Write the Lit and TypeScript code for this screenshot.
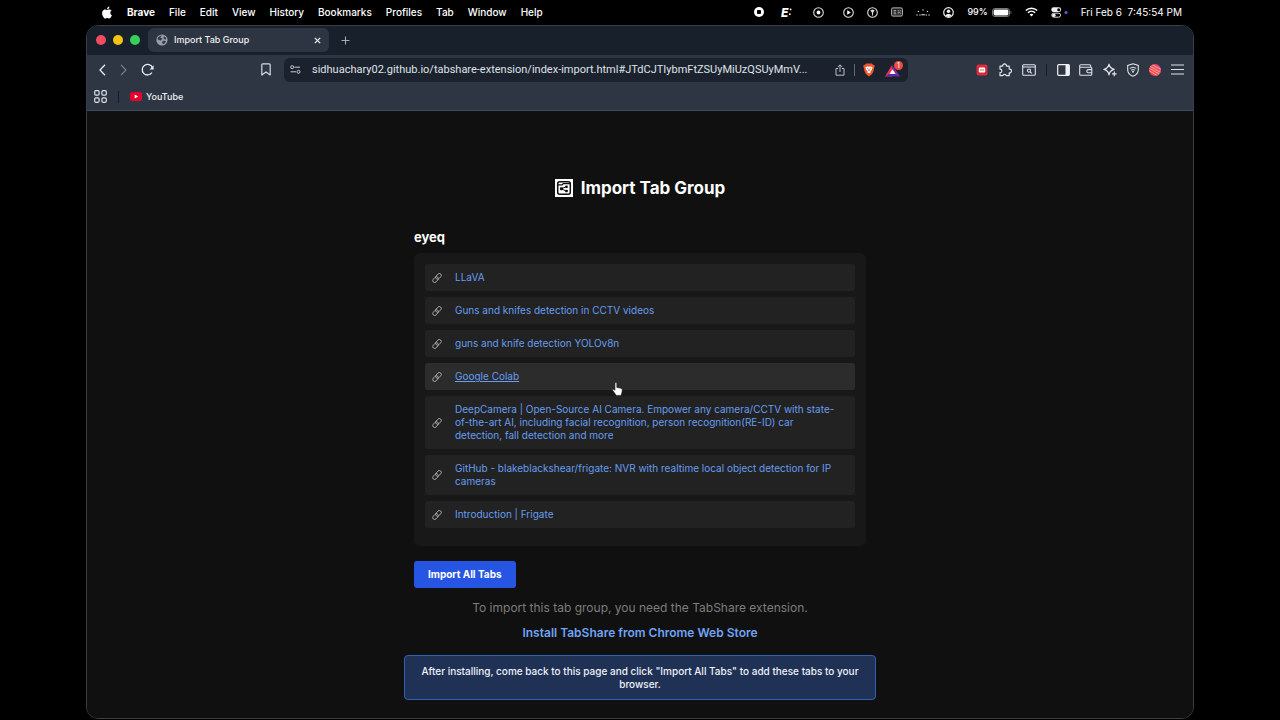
import { LitElement, html, css, svg } from "lit";
import { customElement, property } from "lit/decorators.js";

const icon = (w: number, h: number, box: string, body: unknown, cls = "") =>
  html`<svg class="ico ${cls}" width=${w} height=${h} viewBox=${box} aria-hidden="true">${body}</svg>`;

/* ---------- menu bar glyphs ---------- */
const apple = icon(12, 13, "0 0 24 24", svg`<path fill="#fff" d="M12.152 6.896c-.948 0-2.415-1.078-3.96-1.04-2.04.027-3.91 1.183-4.961 3.014-2.117 3.675-.546 9.103 1.519 12.09 1.013 1.454 2.208 3.09 3.792 3.039 1.52-.065 2.09-.987 3.935-.987 1.831 0 2.35.987 3.96.948 1.637-.026 2.676-1.48 3.676-2.948 1.156-1.688 1.636-3.325 1.662-3.415-.039-.013-3.182-1.221-3.22-4.857-.026-3.04 2.48-4.494 2.597-4.559-1.429-2.09-3.623-2.324-4.39-2.376-2-.156-3.675 1.09-4.61 1.09zM15.53 3.83c.843-1.012 1.4-2.427 1.245-3.83-1.207.052-2.662.805-3.532 1.818-.78.896-1.454 2.338-1.273 3.714 1.338.104 2.715-.688 3.559-1.701"/>`);
const stopIcon = icon(10, 10, "0 0 10 10", svg`<circle cx="5" cy="5" r="5" fill="#fff"/><rect x="3" y="3" width="4" height="4" rx=".8" fill="#000"/>`);
const eIcon = icon(11, 12, "0 0 11 12", svg`<text x="0" y="10.5" font-size="12" font-weight="800" font-style="italic" font-family="Inter, sans-serif" fill="#fff">E</text><circle cx="9.6" cy="3.4" r=".9" fill="#fff"/><circle cx="8.8" cy="8.2" r=".9" fill="#fff"/>`);
const recIcon = icon(11, 11, "0 0 11 11", svg`<circle cx="5.5" cy="5.5" r="4.8" fill="none" stroke="#ddd" stroke-width="1.1"/><circle cx="5.5" cy="5.5" r="1.9" fill="#fff"/>`);
const playIcon = icon(11, 11, "0 0 11 11", svg`<circle cx="5.5" cy="5.5" r="4.8" fill="none" stroke="#ddd" stroke-width="1.1"/><path d="M4.2 3.3 7.8 5.5 4.2 7.7Z" fill="#fff"/>`);
const keyIcon = icon(11, 11, "0 0 11 11", svg`<circle cx="5.5" cy="5.5" r="4.8" fill="none" stroke="#ddd" stroke-width="1.1"/><circle cx="5.5" cy="4" r="1.5" fill="#ddd"/><path d="M5.5 4.5V8.6M3.5 3.8h4" stroke="#ddd" stroke-width="1.1"/>`);
const cardIcon = icon(12, 10, "0 0 12 10", svg`<rect x=".6" y=".9" width="10.8" height="8.2" rx="1.4" fill="#222" stroke="#bbb"/><path d="M2.6 3.6h2.6M2.6 5.2h2.2M2.6 6.8h2.8M6.6 3.6h1.2M8.8 3.6h1M6.6 5.2h3M6.6 6.8h1.2M8.8 6.8h1" stroke="#bbb" stroke-width=".9"/>`);
const dotsIcon = icon(14, 10, "0 0 14 10", svg`<g fill="#ddd"><circle cx="1" cy="8" r=".7"/><circle cx="2.4" cy="4.4" r=".7"/><circle cx="4" cy="8" r=".7"/><circle cx="7" cy="3" r=".7"/><circle cx="11.5" cy="4.4" r=".7"/><circle cx="10.2" cy="8" r=".7"/><circle cx="13" cy="8" r=".7"/><rect x="5.4" y="7.2" width="3.4" height="1.1"/></g>`);
const userIcon = icon(11, 11, "0 0 11 11", svg`<circle cx="5.5" cy="5.5" r="4.8" fill="none" stroke="#eee" stroke-width="1.2"/><circle cx="5.5" cy="4.2" r="1.7" fill="#eee"/><path d="M2.3 8.6C3 6.4 8 6.4 8.7 8.6 7 10.4 4 10.4 2.3 8.6Z" fill="#eee"/>`);
const battery = icon(20, 9, "0 0 20 9", svg`<rect x=".5" y=".5" width="17" height="8" rx="2.4" fill="none" stroke="#777"/><rect x="1.6" y="1.6" width="14.8" height="5.8" rx="1.4" fill="#fff"/><path d="M18.6 3c1.2.4 1.2 2.6 0 3Z" fill="#888"/>`);
const wifi = icon(13, 10, "0 0 13 10", svg`<g fill="none" stroke="#fff" stroke-width="1.5"><path d="M.8 3.6C4 .3 9 .3 12.2 3.6"/><path d="M2.9 5.8C5 3.7 8 3.7 10.1 5.8"/></g><path d="M6.5 9.6 4.6 7.5C5.6 6.5 7.4 6.5 8.4 7.5Z" fill="#fff"/>`);
const control = icon(17, 11, "0 0 17 11", svg`<rect x=".3" y=".3" width="9.8" height="4.7" rx="2.3" fill="#eee"/><circle cx="7.7" cy="2.65" r="1.5" fill="#000"/><rect x=".8" y="6.2" width="8.8" height="4" rx="2" fill="none" stroke="#ddd"/><circle cx="2.9" cy="8.2" r="1.7" fill="#eee"/><circle cx="15" cy="5.5" r="1.6" fill="#6a4fe0"/>`);

/* ---------- browser glyphs ---------- */
const globe = icon(12, 12, "0 0 12 12", svg`<circle cx="6" cy="6" r="5.6" fill="#9aa0aa"/><path d="M2 3.6c1-.9 2-1.7 3.2-2 .7.8-.1 1.3-.9 1.8.5.8 1.6.4 2 1.2.3.9-.8 1-1.2 1.8-.9.3-1.8-.6-2.8-.7-.7-.3-1-.9-.3-2.1ZM8 2.2c1.2.5 2 1.5 2.4 2.9-.8.7-2.3.3-2.7-.7-.3-.9-.3-1.6.3-2.2ZM6.7 7.1c.9-.6 2.3-.4 3.2.2-.3 1.3-1.3 2.4-2.8 2.9-.9-.6-1.2-2.3-.4-3.1Z" fill="#353c4a"/>`);
const close = icon(7, 7, "0 0 7 7", svg`<path d="M.8.8 6.2 6.2M6.2.8.8 6.2" stroke="#eee" stroke-width="1.2"/>`);
const plus = icon(9, 9, "0 0 9 9", svg`<path d="M4.5.5v8M.5 4.5h8" stroke="#a4a9b3" stroke-width="1.1"/>`);
const back = icon(7, 12, "0 0 7 12", svg`<path d="M6 .8 1 6l5 5.2" fill="none" stroke="#e6e9ef" stroke-width="1.3"/>`);
const fwd = icon(7, 12, "0 0 7 12", svg`<path d="M1 .8 6 6 1 11.2" fill="none" stroke="#767d8b" stroke-width="1.2"/>`);
const reload = icon(13, 13, "0 0 13 13", svg`<path d="M10.9 9.7A5.3 5.3 0 1 1 11.5 4.8" fill="none" stroke="#e6e9ef" stroke-width="1.3"/><path d="M12.6 2.2v4.2H8.6Z" fill="#e6e9ef"/>`);
const mark = icon(10, 13, "0 0 10 13", svg`<path d="M.8 1.8Q.8.8 1.8.8h6.4q1 0 1 1v10.2L5 8.9.8 12Z" fill="none" stroke="#d5d9e2" stroke-width="1.2" stroke-linejoin="round"/>`);
const tune = icon(11, 9, "0 0 11 9", svg`<g fill="none" stroke="#c9ced8"><circle cx="2.2" cy="2.2" r="1.5"/><path d="M4.5 2.2H10M.6 6.8H6"/><circle cx="8.5" cy="6.8" r="1.5"/></g>`);
const share = icon(10, 12, "0 0 10 12", svg`<g fill="none" stroke="#b9bfca"><path d="M3.2 4.5H1v6.7h8V4.5H6.8M5 8V1M2.8 3 5 .8 7.2 3"/></g>`);
const brave = icon(12, 14, "0 0 12 14", svg`<path d="M3.2.6h5.6L10 1.8l1.3.2.4 1.6-.5 1.2c-.4 3-1.2 5.2-2.7 6.7L6 13.4l-2.5-1.9C2 10 1.2 7.8.8 4.8L.3 3.6.7 2 2 1.8Z" fill="#f0562b"/><path d="M2.5 4 4.8 3.4 6 3.8l1.2-.4 2.3.6-.6 2.7L7.4 8.3l.4 1L6 10.5 4.2 9.3l.4-1L3.1 6.7Z" fill="#fff"/><path d="M3.7 5 5.3 5.5 4.9 6.4ZM8.3 5 6.7 5.5 7.1 6.4ZM5.6 6.2h.8l.3 1.7L6 8.3l-.7-.4Z" fill="#d7431d"/>`);
const bat = icon(18, 18, "0 0 18 18", svg`<path d="M8 4 1 15.5h7l1-4Z" fill="#ef3355"/><path d="M1 15.5h15l-3.5-4.2H7.5Z" fill="#5b2aa0"/><path d="M8 4 16 15.5 9.5 12Z" fill="#8b2fa8"/><path d="M8.5 8.2 11.6 13.1H5.5Z" fill="#fff"/>`);
const redBox = icon(12, 12, "0 0 12 12", svg`<rect x=".5" y=".5" width="11" height="11" rx="2" fill="#d92b3a"/><rect x="2.8" y="3.6" width="6.4" height="4.8" rx="1.2" fill="#fff"/><path d="M4 6h4" stroke="#d92b3a" stroke-width=".8"/>`);
const puzzle = icon(14, 14, "0 0 14 14", svg`<path d="M2 3.2h2.7a1.9 1.9 0 1 1 3.7 0h2.8v2.9a1.9 1.9 0 1 1 0 3.7v2.9H8.3a1.8 1.8 0 0 0-3.5 0H2V9.7a1.8 1.8 0 0 0 0-3.6Z" fill="none" stroke="#dfe3ea" stroke-width="1.2" stroke-linejoin="round"/>`);
const winSearch = icon(14, 12, "0 0 14 12", svg`<g fill="none" stroke="#dfe3ea" stroke-width="1.1"><rect x=".7" y=".7" width="12.6" height="10.6" rx="1"/><path d="M.7 3h12.6"/><circle cx="7" cy="6.6" r="1.6"/><path d="M8.2 7.8 9.7 9.4"/></g>`);
const sidebar = icon(13, 12, "0 0 13 12", svg`<rect x=".7" y=".7" width="11.6" height="10.6" rx="1" fill="none" stroke="#eef1f6" stroke-width="1.2"/><path d="M8.5.7H12.3V11.3H8.5Z" fill="#eef1f6"/>`);
const wallet = icon(14, 12, "0 0 14 12", svg`<g fill="none" stroke="#dfe3ea" stroke-width="1.1"><path d="M11.7 3.2V1.8Q11.7.7 10.6.7H1.8Q.7.7.7 1.8v8.4q0 1.1 1.1 1.1h9.9q1.1 0 1.1-1.1V4.3q0-1.1-1.1-1.1H.9"/><path d="M13 5.6H9.4q-1.6 0-1.6 1.6t1.6 1.6H13"/></g>`);
const spark = icon(14, 14, "0 0 14 14", svg`<path d="M6 1.2Q6.8 5.4 11.2 6.4 6.8 7.4 6 11.8 5.2 7.4.9 6.4 5.2 5.4 6 1.2Z" fill="none" stroke="#dfe3ea" stroke-width="1.2" stroke-linejoin="round"/><path d="M11.3 8.6v4.6M9 10.9h4.6" stroke="#dfe3ea" stroke-width="1.2"/>`);
const shield = icon(12, 14, "0 0 12 14", svg`<path d="M6 .8 11.3 2.5v4.2c0 3-2.2 5.3-5.3 6.5C2.9 12 .7 9.7.7 6.7V2.5Z" fill="none" stroke="#dfe3ea" stroke-width="1.1"/><path d="M2.8 5.4Q6 3 9.2 5.4M4 7.2Q6 5.8 8 7.2" fill="none" stroke="#dfe3ea"/><circle cx="6" cy="8.7" r="1" fill="#dfe3ea"/>`);
const avatar = icon(12, 12, "0 0 12 12", svg`<defs><linearGradient id="av" x1="0" y1="1" x2="1" y2="0"><stop offset="0" stop-color="#f0305a"/><stop offset=".5" stop-color="#f2505c"/><stop offset="1" stop-color="#e03a9a"/></linearGradient><clipPath id="avc"><circle cx="6" cy="6" r="6"/></clipPath></defs><circle cx="6" cy="6" r="6" fill="url(#av)"/><g clip-path="url(#avc)" stroke="#ffc08a" stroke-width=".8"><path d="M-1 1 12 8.5M-1 3.5 11 10.5M-1 6 9 12M1-.5 13 6"/></g>`);
const burger = icon(13, 11, "0 0 13 11", svg`<path d="M0 1h13M0 5.5h13M0 10h13" stroke="#dfe3ea" stroke-width="1.2"/>`);
const grid4 = icon(13, 13, "0 0 13 13", svg`<g fill="none" stroke="#dfe3ea" stroke-width="1.2"><rect x=".7" y=".7" width="4.4" height="4.4" rx="1.2"/><rect x="7.9" y=".7" width="4.4" height="4.4" rx="1.2"/><rect x=".7" y="7.9" width="4.4" height="4.4" rx="1.2"/><rect x="7.9" y="7.9" width="4.4" height="4.4" rx="1.2"/></g>`);
const youtube = icon(12, 9, "0 0 12 9", svg`<rect width="12" height="9" rx="2" fill="#e4002f"/><path d="M4.7 2.5 8.2 4.5 4.7 6.5Z" fill="#fff"/>`);

/* ---------- page glyphs ---------- */
const logo = icon(18, 18, "0 0 18 18", svg`<rect width="18" height="18" fill="#fff"/><rect x="2.7" y="2.7" width="12.6" height="12.6" rx="2" fill="#fff" stroke="#111" stroke-width="1.5"/><path d="M3 5.8H7.2L8.2 4.6H15" fill="none" stroke="#111" stroke-width="1.2"/><path d="M6.4 9.8 11.2 7.8M6.4 9.8 11.2 12" stroke="#111" stroke-width="1"/><rect x="5" y="8.3" width="3" height="3" rx=".8" fill="#111"/><rect x="10.2" y="6.6" width="2.6" height="2.4" rx=".8" fill="#111"/><rect x="10.2" y="10.8" width="2.6" height="2.4" rx=".8" fill="#111"/>`);
const chain = icon(10, 10, "0 0 10 10", svg`<g fill="none" stroke="#b0b0b0" stroke-width=".9" transform="rotate(-48 5 5)"><rect x="-.4" y="3.1" width="6.4" height="3.8" rx="1.9"/><rect x="4" y="3.1" width="6.4" height="3.8" rx="1.9"/></g>`);
const hand = icon(11, 14, "0 0 11 14", svg`<path d="M3 1.5q0-1 .9-1t.9 1V5.4l4 .8q1.5.4 1.5 1.8l-.5 3q-.3 1.4-1 2.4H4.3Q2.5 11 .8 8.6q-.5-1 .3-1.3.8-.2 1.9 1Z" fill="#fff" stroke="#222" stroke-width=".6"/>`);

@customElement("mac-menubar")
class MacMenubar extends LitElement {
  static styles = css`
    :host { display: flex; align-items: center; justify-content: space-between; height: 24px; padding: 0 98px 1px 101px; color: #fff; font-size: 10px; line-height: 12px; font-weight: 500; white-space: nowrap; }
    .ico { display: block; flex: none; }
    .menus { display: flex; align-items: center; gap: 14px; }
    .status { display: flex; align-items: center; gap: 13px; }
    button { all: unset; }
    .app { font-weight: 700; }
    .pct { display: flex; align-items: center; gap: 4px; font-size: 9px; }
    .editor { margin: 0 8px 0 4px; }
    .play { margin-left: 6px; }
    .clock { font-weight: 400; white-space: pre; }
  `;
  render() {
    const menus = ["File", "Edit", "View", "History", "Bookmarks", "Profiles", "Tab", "Window", "Help"];
    return html`
      <nav class="menus" aria-label="Menu bar">
        <button aria-label="Apple">${apple}</button>
        <button class="app">Brave</button>
        ${menus.map((m) => html`<button>${m}</button>`)}
      </nav>
      <div class="status">
        ${stopIcon}<span class="editor">${eIcon}</span>${recIcon}<span class="play">${playIcon}</span>${keyIcon}${cardIcon}${dotsIcon}${userIcon}
        <span class="pct">99% ${battery}</span>
        ${wifi}${control}
        <span class="clock">Fri Feb 6  7:45:54 PM</span>
      </div>
    `;
  }
}

@customElement("browser-chrome")
class BrowserChrome extends LitElement {
  static styles = css`
    :host { display: block; color: #eef0f4; font-size: 9px; line-height: 14px; }
    .ico { display: block; flex: none; }
    button { all: unset; display: flex; }
    .strip { display: flex; align-items: center; box-sizing: border-box; height: 29px; padding: 0 9px 1px; background: #18202b; }
    .lights { display: flex; gap: 7px; margin-right: 8px; }
    .light { width: 10px; height: 10px; border-radius: 50%; }
    .red { background: #f04b5f; }
    .yellow { background: #f3c316; }
    .green { background: #38cf58; }
    .tab { display: flex; align-items: center; gap: 6px; box-sizing: border-box; width: 181px; height: 24px; padding: 0 8px; border-radius: 6px; background: #2e3542; margin-right: 12px; font-weight: 500; }
    .title { flex: 1; }
    .tools { display: flex; align-items: center; height: 29px; padding: 0 9px 0 12px; background: #2e3543; }
    .nav { display: flex; align-items: center; gap: 14px; width: 162px; }
    .mark { margin-right: 13px; }
    .bar { display: flex; align-items: center; gap: 9px; box-sizing: border-box; flex: 0 1 624px; min-width: 0; height: 24px; padding: 0 6px; border-radius: 6px; background: #1b222e; }
    .url { all: unset; flex: 1; min-width: 0; padding-left: 2px; color: #dfe2e8; font-family: Roboto, Inter, sans-serif; font-size: 11px; line-height: 14px; }
    .sep { width: 1px; height: 12px; background: #606775; }
    .shields { margin-left: -1px; }
    .rewards { position: relative; }
    .badge { position: absolute; right: -1px; top: 0; width: 9px; height: 9px; border-radius: 50%; background: #ee4a45; color: #fff; font-size: 7px; line-height: 9px; text-align: center; }
    .right { display: flex; align-items: center; justify-content: space-between; width: 208px; margin-left: auto; }
    .dark { background: #171d27; }
    .marks { display: flex; align-items: center; gap: 11px; height: 25px; padding: 0 7px 1px; background: #2e3543; border-bottom: 1px solid #434a57; }
    a { display: flex; align-items: center; gap: 4px; color: inherit; text-decoration: none; font-weight: 500; }
  `;
  render() {
    return html`
      <div class="strip">
        <div class="lights"><span class="light red"></span><span class="light yellow"></span><span class="light green"></span></div>
        <div class="tab">${globe}<span class="title">Import Tab Group</span><button aria-label="Close tab">${close}</button></div>
        <button aria-label="New tab">${plus}</button>
      </div>
      <div class="tools">
        <div class="nav">
          <button aria-label="Back">${back}</button><button aria-label="Forward">${fwd}</button><button aria-label="Reload">${reload}</button>
        </div>
        <button class="mark" aria-label="Bookmark this page">${mark}</button>
        <div class="bar">
          ${tune}
          <input class="url" aria-label="Address" readonly .value=${"sidhuachary02.github.io/tabshare-extension/index-import.html#JTdCJTIybmFtZSUyMiUzQSUyMmV..."} />
          <button aria-label="Share">${share}</button><span class="sep"></span><button class="shields" aria-label="Shields">${brave}</button>
          <button class="rewards" aria-label="Rewards">${bat}<span class="badge">1</span></button>
        </div>
        <div class="right">
          ${redBox}${puzzle}${winSearch}<span class="sep dark"></span>${sidebar}${wallet}${spark}${shield}${avatar}
          <button aria-label="Menu">${burger}</button>
        </div>
      </div>
      <div class="marks">
        <button aria-label="Apps">${grid4}</button><span class="sep dark"></span>
        <a href="#">${youtube}YouTube</a>
      </div>
    `;
  }
}

@customElement("link-row")
class LinkRow extends LitElement {
  @property() label = "";
  @property({ type: Boolean, reflect: true }) hovered = false;
  static styles = css`
    :host { position: relative; display: flex; align-items: center; gap: 13px; padding: 7px 12px 7px 7px; border-radius: 3px; background: #222; font-size: 10px; line-height: 13px; }
    :host([hovered]) { background: #2c2c2c; }
    .ico { display: block; flex: none; }
    a { color: #669df0; text-decoration: none; }
    :host([hovered]) a { text-decoration: underline; }
    .hand { position: absolute; left: 187px; top: 19px; z-index: 1; }
  `;
  render() {
    return html`${chain}<a href="#">${this.label}</a>${this.hovered ? html`<span class="hand">${hand}</span>` : ""}`;
  }
}

@customElement("import-page")
class ImportPage extends LitElement {
  static styles = css`
    :host { display: flex; flex-direction: column; align-items: center; padding: 65px 16px 17px; background: #101010; color: #fff; }
    .ico { display: block; flex: none; }
    h1 { display: flex; align-items: center; gap: 8px; margin: 0 0 28px; font-size: 17px; line-height: 24px; font-weight: 700; }
    .group { width: 100%; max-width: 452px; }
    h2 { margin: 0 0 7px; font-size: 13px; line-height: 18px; font-weight: 700; }
    .list { display: flex; flex-direction: column; gap: 6px; padding: 11px 11px 18px; border-radius: 6px; background: #181818; }
    .import { all: unset; display: block; box-sizing: border-box; margin: 15px 0 12px; padding: 6px 14px; border-radius: 3px; background: #2655e3; font-size: 10px; line-height: 15px; font-weight: 700; }
    p { margin: 0; font-size: 12px; line-height: 16px; color: #7d7d7d; }
    .store { margin: 9px 0 14px; font-size: 12px; line-height: 16px; font-weight: 600; color: #6fa3f5; text-decoration: none; }
    .note { box-sizing: border-box; width: 100%; max-width: 472px; padding: 9px 10px 8px; border: 1px solid #345faf; border-radius: 4px; background: #1f3154; font-size: 10px; line-height: 13px; font-weight: 500; color: #eef2fa; text-align: center; }
  `;
  render() {
    const rows = [
      "LLaVA",
      "Guns and knifes detection in CCTV videos",
      "guns and knife detection YOLOv8n",
      "Google Colab",
      "DeepCamera | Open-Source AI Camera. Empower any camera/CCTV with state-of-the-art AI, including facial recognition, person recognition(RE-ID) car detection, fall detection and more",
      "GitHub - blakeblackshear/frigate: NVR with realtime local object detection for IP cameras",
      "Introduction | Frigate",
    ];
    return html`
      <h1>${logo}Import Tab Group</h1>
      <section class="group">
        <h2>eyeq</h2>
        <div class="list">
          ${rows.map((r) => html`<link-row .label=${r} ?hovered=${r === "Google Colab"}></link-row>`)}
        </div>
        <button class="import">Import All Tabs</button>
      </section>
      <p>To import this tab group, you need the TabShare extension.</p>
      <a class="store" href="#">Install TabShare from Chrome Web Store</a>
      <div class="note">After installing, come back to this page and click "Import All Tabs" to add these tabs to your browser.</div>
    `;
  }
}

@customElement("app-root")
class AppRoot extends LitElement {
  static styles = css`
    :host { display: flex; flex-direction: column; box-sizing: border-box; min-height: 100vh; padding-bottom: 1px; background: #000; font-family: Inter, "Liberation Sans", sans-serif; }
    .window { display: flex; flex-direction: column; flex: 1; margin: 0 86px; border: 1px solid #3a3f47; border-radius: 12px; overflow: hidden; }
    import-page { flex: 1; }
  `;
  render() {
    return html`<mac-menubar></mac-menubar>
      <main class="window"><browser-chrome></browser-chrome><import-page></import-page></main>`;
  }
}
